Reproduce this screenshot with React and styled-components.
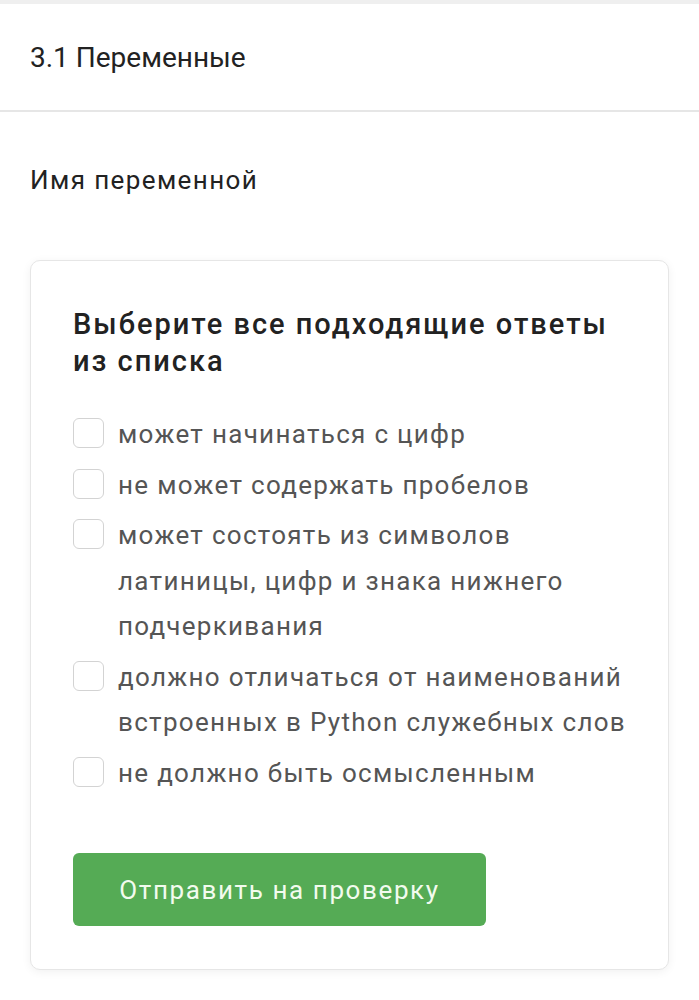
import React from "react";
import styled, { createGlobalStyle } from "styled-components";

const Global = createGlobalStyle`
  html, body { margin: 0; padding: 0; background: #ffffff; }
  body { font-family: Roboto, "Noto Sans", "Liberation Sans", sans-serif; -webkit-font-smoothing: antialiased; }
`;

const Page = styled.div`
  width: 699px;
  min-height: 1000px;
  background: #ffffff;
  border-top: 4px solid #efefef;
  box-sizing: border-box;
`;

const Header = styled.header`
  height: 106px;
  display: flex;
  align-items: center;
  padding: 0 30px;
  border-bottom: 2px solid #e6e6e6;
  font-size: 28px;
  color: #222;
`;

const Lesson = styled.div`
  padding: 52px 30px 0;
  font-size: 26px;
  letter-spacing: 1.4px;
  color: #222;
  line-height: 32px;
`;

const Card = styled.section`
  margin: 64px 30px 0;
  border: 1px solid #e6e6e6;
  border-radius: 10px;
  box-shadow: 0 2px 10px rgba(0, 0, 0, 0.06);
  padding: 45px 42px 43px;
  background: #fff;
`;

const Title = styled.h2`
  margin: 0 0 32px;
  font-size: 29px;
  letter-spacing: 2px;
  line-height: 37px;
  font-weight: 500;
  color: #222;
`;

const Options = styled.div`
  display: flex;
  flex-direction: column;
  gap: 5px;
`;

const Option = styled.label`
  display: flex;
  align-items: flex-start;
  gap: 14px;
  font-size: 26px;
  letter-spacing: 1.3px;
  line-height: 45.5px;
  color: #555;
`;

const Box = styled.span`
  flex: none;
  width: 31px;
  height: 30px;
  box-sizing: border-box;
  margin-top: 6px;
  border: 1.5px solid #d3d3d3;
  border-radius: 6px;
  background: #fff;
`;

const Submit = styled.button`
  margin-top: 57px;
  width: 413px;
  height: 73px;
  border: none;
  border-radius: 6px;
  background: #55ab55;
  color: #f2fbee;
  font-family: inherit;
  font-size: 26px;
  letter-spacing: 1.6px;
  cursor: pointer;
`;

const options = [
  "может начинаться с цифр",
  "не может содержать пробелов",
  "может состоять из символов латиницы, цифр и знака нижнего подчеркивания",
  "должно отличаться от наименований встроенных в Python служебных слов",
  "не должно быть осмысленным",
];

export default function App() {
  return (
    <>
      <Global />
      <Page>
        <Header>3.1 Переменные</Header>
        <Lesson>Имя переменной</Lesson>
        <Card>
          <Title>Выберите все подходящие ответы из списка</Title>
          <Options>
            {options.map((o) => (
              <Option key={o}>
                <Box />
                <span>{o}</span>
              </Option>
            ))}
          </Options>
          <Submit>Отправить на проверку</Submit>
        </Card>
      </Page>
    </>
  );
}
